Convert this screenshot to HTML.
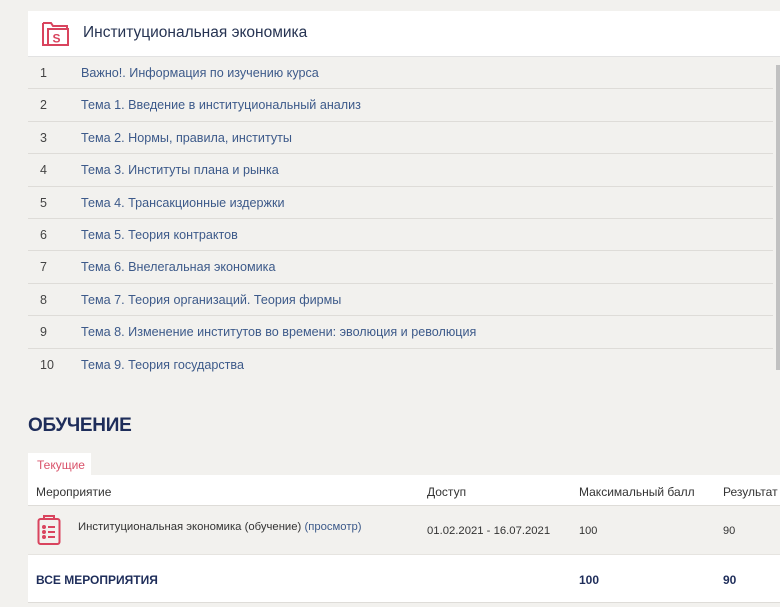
<!DOCTYPE html>
<html><head><meta charset="utf-8"><style>
*{margin:0;padding:0;box-sizing:border-box}
body{width:780px;height:607px;background:#f2f1ee;font-family:"Liberation Sans",sans-serif;position:relative;overflow:hidden;font-size:12px;color:#333}
.hdr{position:absolute;left:28px;top:11px;width:752px;height:46px;background:#fff;border-bottom:1px solid #e2e2e2}
.hdr .t{position:absolute;left:55px;top:13px;font-size:15.5px;color:#263352}
.row{position:absolute;left:28px;width:745px;height:32.4px;border-bottom:1px solid #dedcd8}
.row .n{position:absolute;left:12px;top:9px;color:#444;font-size:12.5px}
.row .l{position:absolute;left:53px;top:9px;color:#3d5a8a;font-size:12.6px}
.sb{position:absolute;left:776px;top:65px;width:4px;height:305px;background:#c1c1c1}
h2{position:absolute;left:28px;top:415px;font-size:19px;font-weight:bold;color:#1e2d5a;letter-spacing:-0.3px}
.tab{position:absolute;left:28px;top:453px;width:63px;height:23px;background:#fff;color:#d9526a;padding:5px 0 0 9px}
.th{position:absolute;left:28px;top:475px;width:752px;height:31px;background:#fff;border-bottom:1px solid #dedcd8}
.c{position:absolute}
.dr{position:absolute;left:28px;top:506px;width:752px;height:49px;border-bottom:1px solid #e6e4e0}
.tot{position:absolute;left:28px;top:555px;width:752px;height:48px;background:#fff;border-bottom:1px solid #dedcd8;color:#1e2d5a;font-weight:bold}
</style></head><body>
<div class="hdr">
<svg style="position:absolute;left:13px;top:8px" width="30" height="30" viewBox="0 0 30 30" fill="none" stroke="#d9445e" stroke-width="2"><path d="M2 4h8l2 3h14v3"/><path d="M2 4v22h25V10H7v16"/><text x="11.5" y="23.5" font-size="12" font-family="Liberation Sans" fill="#d9445e" stroke="none" font-weight="bold">S</text></svg>
<div class="t">Институциональная экономика</div></div>
<div class="row" style="top:57px"><span class="n">1</span><span class="l">Важно!. Информация по изучению курса</span></div>
<div class="row" style="top:89.4px"><span class="n">2</span><span class="l">Тема 1. Введение в институциональный анализ</span></div>
<div class="row" style="top:121.8px"><span class="n">3</span><span class="l">Тема 2. Нормы, правила, институты</span></div>
<div class="row" style="top:154.2px"><span class="n">4</span><span class="l">Тема 3. Институты плана и рынка</span></div>
<div class="row" style="top:186.6px"><span class="n">5</span><span class="l">Тема 4. Трансакционные издержки</span></div>
<div class="row" style="top:219px"><span class="n">6</span><span class="l">Тема 5. Теория контрактов</span></div>
<div class="row" style="top:251.4px"><span class="n">7</span><span class="l">Тема 6. Внелегальная экономика</span></div>
<div class="row" style="top:283.8px"><span class="n">8</span><span class="l">Тема 7. Теория организаций. Теория фирмы</span></div>
<div class="row" style="top:316.2px"><span class="n">9</span><span class="l">Тема 8. Изменение институтов во времени: эволюция и революция</span></div>
<div class="row" style="top:348.6px;border-bottom:none"><span class="n">10</span><span class="l">Тема 9. Теория государства</span></div>
<div class="sb"></div>
<h2>ОБУЧЕНИЕ</h2>
<div class="tab">Текущие</div>
<div class="th"><span class="c" style="left:8px;top:10px">Мероприятие</span><span class="c" style="left:399px;top:10px">Доступ</span><span class="c" style="left:551px;top:10px">Максимальный балл</span><span class="c" style="left:695px;top:10px">Результат</span></div>
<div class="dr">
<svg style="position:absolute;left:9px;top:8px" width="24" height="32" viewBox="0 0 24 32" fill="none" stroke="#d9445e" stroke-width="2"><rect x="1.5" y="5" width="21" height="25" rx="2"/><path d="M7 5V2h10v3"/><circle cx="7" cy="13" r="1"/><circle cx="7" cy="18" r="1"/><circle cx="7" cy="23" r="1"/><path d="M11 13h7M11 18h7M11 23h7"/></svg>
<span class="c" style="left:50px;top:15px;font-size:11.3px">Институциональная экономика (обучение) <span style="color:#3d5a8a">(просмотр)</span></span>
<span class="c" style="left:399px;top:19px;font-size:11.3px">01.02.2021 - 16.07.2021</span><span class="c" style="left:551px;top:19px;font-size:11px">100</span><span class="c" style="left:695px;top:19px;font-size:11px">90</span></div>
<div class="tot"><span class="c" style="left:8px;top:18px">ВСЕ МЕРОПРИЯТИЯ</span><span class="c" style="left:551px;top:18px">100</span><span class="c" style="left:695px;top:18px">90</span></div>
</body></html>
